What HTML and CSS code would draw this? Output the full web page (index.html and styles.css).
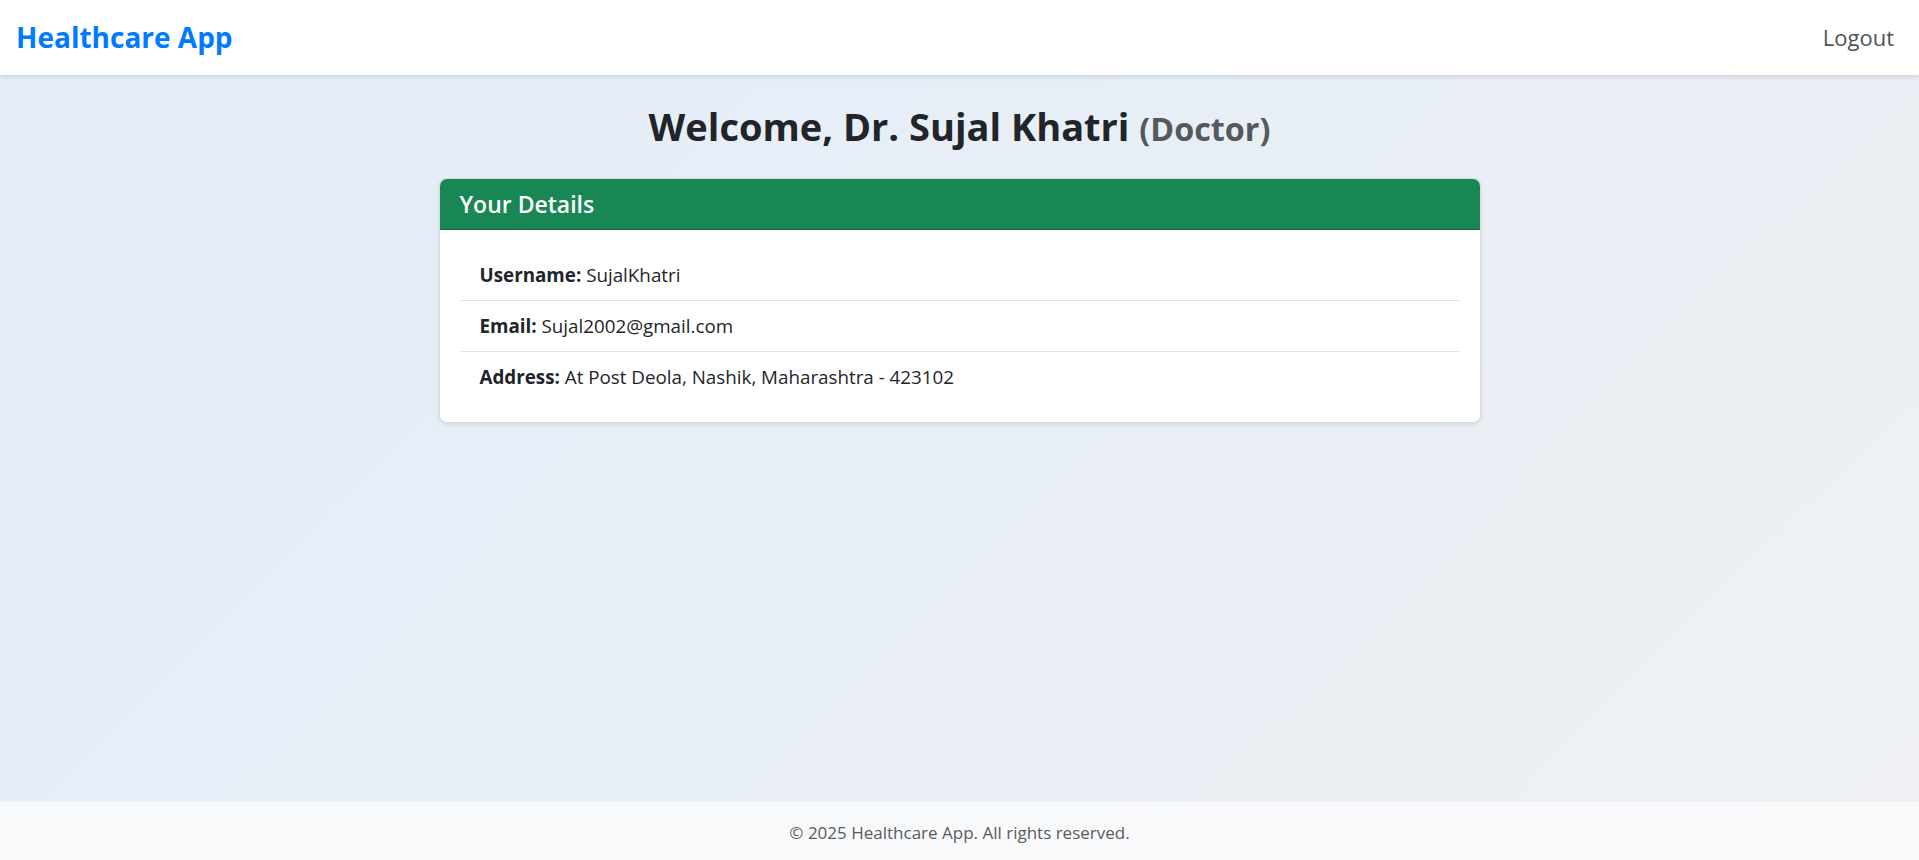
FILE: index.html
```html
<!DOCTYPE html>
<html lang="en">
<head>
<meta charset="utf-8">
<title>Healthcare App</title>
<link rel="stylesheet" href="styles.css">
</head>
<body>
<nav class="navbar">
  <a class="brand" href="#">Healthcare App</a>
  <a class="nav-link" href="#">Logout</a>
</nav>
<main class="main">
  <h2 class="title">Welcome, Dr. Sujal Khatri <small class="role">(Doctor)</small></h2>
  <section class="card">
    <div class="card-header"><h5>Your Details</h5></div>
    <div class="card-body">
      <ul class="list">
        <li class="item"><strong>Username:</strong> SujalKhatri</li>
        <li class="item"><strong>Email:</strong> Sujal2002@gmail.com</li>
        <li class="item"><strong>Address:</strong> At Post Deola, Nashik, Maharashtra - 423102</li>
      </ul>
    </div>
  </section>
</main>
<footer class="footer">
  <p>© 2025 Healthcare App. All rights reserved.</p>
</footer>
</body>
</html>
```
FILE: styles.css
```css
* { box-sizing: border-box; }
html, body { height: 100%; }
body {
  margin: 0;
  font-family: "Open Sans", "Noto Sans", sans-serif;
  font-size: 20px;
  line-height: 1.5;
  color: #212529;
  background: linear-gradient(135deg, #e3edf9 0%, #eef0f3 100%);
  display: flex;
  flex-direction: column;
  min-height: 100vh;
}
a { text-decoration: none; }
.navbar {
  height: 75px;
  background: #fff;
  box-shadow: 0 2px 5px rgba(0,0,0,0.12);
  display: flex;
  align-items: center;
  justify-content: space-between;
  padding: 0 25px 0 16px;
  position: relative;
  z-index: 1;
}
.brand {
  color: #007bff;
  font-weight: 700;
  font-size: 28px;
  line-height: 1.2;
}
.nav-link {
  color: #4f5357;
  font-size: 22px;
}
.main {
  flex: 1;
  display: flex;
  flex-direction: column;
  align-items: center;
}
.title {
  margin: 29px 0 28px;
  font-size: 38px;
  font-weight: 700;
  line-height: 1.2;
}
.role {
  font-size: 0.85em;
  color: #55595d;
}
.card {
  width: 1042px;
  background: #fff;
  border: 1px solid rgba(0,0,0,0.15);
  border-radius: 8px;
  box-shadow: 0 2px 5px rgba(0,0,0,0.08);
  overflow: hidden;
}
.card-header {
  background: #198754;
  color: #fff;
  padding: 10px 20px;
  border-bottom: 1px solid rgba(0,0,0,0.18);
}
.card-header h5 {
  margin: 0;
  font-size: 23px;
  font-weight: 600;
  line-height: 30px;
}
.card-body { padding: 20px; }
.list { list-style: none; margin: 0; padding: 0; }
.item {
  padding: 10px 20px;
  border-bottom: 1px solid #dee2e6;
  font-size: 18.8px;
  line-height: 30px;
}
.item:last-child { border-bottom: 0; }
.item strong { font-weight: 700; }
.footer {
  background: #f8f9fa;
  height: 58px;
  display: flex;
  align-items: center;
  justify-content: center;
  padding-top: 4px;
}
.footer p {
  margin: 0;
  font-size: 17px;
  color: #595c5f;
}
```
